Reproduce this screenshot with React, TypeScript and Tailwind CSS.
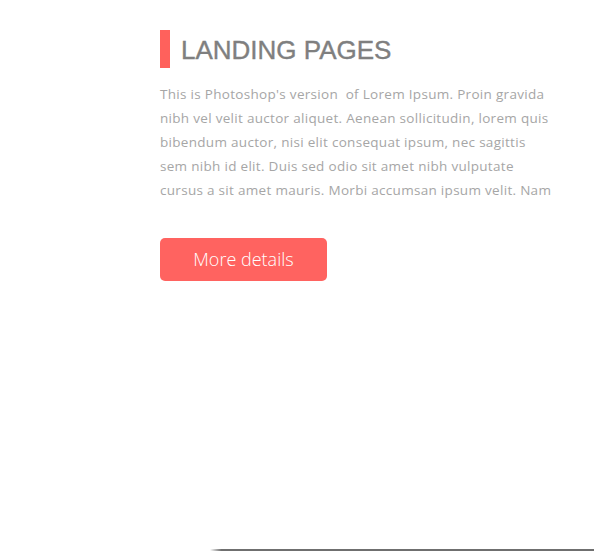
const lines = [
  "This is Photoshop's version  of Lorem Ipsum. Proin gravida",
  "nibh vel velit auctor aliquet. Aenean sollicitudin, lorem quis",
  "bibendum auctor, nisi elit consequat ipsum, nec sagittis",
  "sem nibh id elit. Duis sed odio sit amet nibh vulputate",
  "cursus a sit amet mauris. Morbi accumsan ipsum velit. Nam",
];

export default function App() {
  return (
    <div className="w-[594px] h-[551px] bg-white flex flex-col overflow-hidden">
      <div className="pl-[160px] pt-[30px] flex-1">
        <div className="flex items-center gap-[11px]">
          <div className="w-[10px] h-[38px] bg-[#ff615c]" />
          <h2 className="text-[26px] leading-none text-[#7f7f7f] font-['Liberation_Sans',Arial,sans-serif] mt-[2px] [-webkit-text-stroke:0.4px_#7f7f7f]">
            LANDING PAGES
          </h2>
        </div>
        <div className="mt-[14px] font-['Open_Sans',sans-serif] text-[13.5px] leading-[24px] tracking-[0.3px] text-[#a6a6a6] whitespace-pre">
          {lines.map((l) => (
            <div key={l}>{l}</div>
          ))}
        </div>
        <button className="mt-[36px] w-[167px] h-[43px] rounded-[5px] bg-[#ff6360] text-white text-[18px] font-light font-['Open_Sans',sans-serif]">
          More details
        </button>
      </div>
      <div className="ml-[210px] h-[2px] bg-gradient-to-r from-white to-[#6f6f6f] to-[3%]" />
    </div>
  );
}
